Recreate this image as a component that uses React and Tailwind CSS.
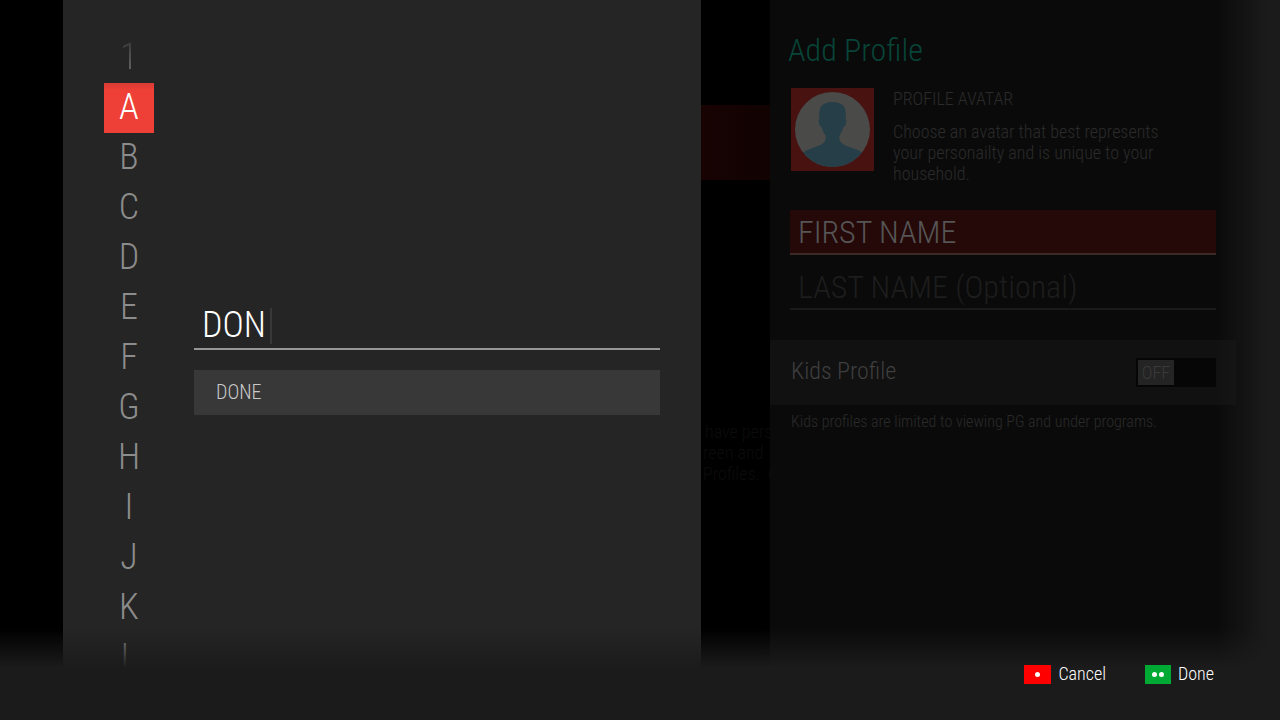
import React, { useState } from "react";

const LETTERS = ["1", "A", "B", "C", "D", "E", "F", "G", "H", "I", "J", "K", "L"];

function LetterPicker({ selected, onSelect }) {
  return (
    <nav aria-label="Letters" className="flex w-[50px] shrink-0 flex-col pt-[33px]">
      {LETTERS.map((letter) => (
        <button
          key={letter}
          type="button"
          onClick={() => onSelect(letter)}
          className={
            letter === selected
              ? "h-[50px] bg-gradient-to-b from-[#d93b35] to-[#ee4036] to-15% pb-0.5 text-4xl text-white"
              : letter === "1"
                ? "h-[50px] bg-gradient-to-b from-[#303030] to-[#777777] bg-clip-text pb-0.5 text-4xl text-transparent"
                : "h-[50px] pb-0.5 text-4xl text-[#8c8c8c]"
          }
        >
          {letter}
        </button>
      ))}
    </nav>
  );
}

function NameEntry({ name, onChange }) {
  return (
    <form
      className="flex min-w-0 flex-1 flex-col gap-5 pt-[300px]"
      onSubmit={(event) => event.preventDefault()}
    >
      <div className="flex h-[50px] items-end border-b-2 border-[#969696] pb-1 pl-2">
        <input
          aria-label="First name"
          value={name}
          onChange={(event) => onChange(event.target.value)}
          className="field-sizing-content h-[38px] bg-transparent text-4xl text-white outline-none"
        />
        <span className="ml-1 h-9 w-0.5 bg-[#383838]" />
      </div>
      <button type="submit" className="h-[45px] bg-[#383838] px-[22px] pb-0.5 text-left text-xl text-[#cacaca]">
        DONE
      </button>
    </form>
  );
}

function Avatar() {
  return (
    <svg viewBox="0 0 83 83" className="size-[83px] shrink-0" role="img" aria-label="Avatar">
      <defs>
        <clipPath id="avatar-disc">
          <circle cx="41.5" cy="41.5" r="37.5" />
        </clipPath>
      </defs>
      <rect width="83" height="83" fill="#471210" />
      <circle cx="41.5" cy="41.5" r="37.5" fill="#4a4a48" />
      <path
        clipPath="url(#avatar-disc)"
        fill="#253e47"
        d="M41.5 14C49 14 54.5 17.500 54.700 24V31C55.600 31.200 55.500 33.500 54.800 36C54.200 38 53.400 39 52.300 39.200C51.500 42.500 50.500 44.500 49 46.500C48 48.500 48 50 48.800 52C50 56 54 57.500 60 59.500C66 61.500 70 63 72.500 66V83H10.500V66C13 63 17 61.500 23 59.500C29 57.500 33 56 34.200 52C35 50 35 48.500 34 46.500C32.500 44.500 31.500 42.500 30.700 39.200C29.600 39 28.800 38 28.200 36C27.500 33.500 27.400 31.200 28.300 31V24C28.500 17.500 34 14 41.5 14Z"
      />
    </svg>
  );
}

function AddProfile() {
  const [kids, setKids] = useState(false);
  return (
    <section className="min-w-0 bg-[#0a0a0a]">
      <div className="px-5 pt-[30px]">
        <h1 className="-ml-0.5 text-[32px] leading-10 text-[#084437]">Add Profile</h1>
        <div className="mt-[18px] flex gap-[19px] pl-px">
          <Avatar />
          <div className="text-lg leading-[21px] text-[#2b2b2b]">
            <h2>PROFILE AVATAR</h2>
            <p className="mt-3 max-w-[280px]">
              Choose an avatar that best represents your personailty and is unique to your household.
            </p>
          </div>
        </div>
        <input
          aria-label="First name"
          placeholder="FIRST NAME"
          className="mt-[26px] h-[45px] w-full border-b-2 border-[#3c2a29] bg-[#250909] px-2 text-[32px] outline-none placeholder:text-[#555555]"
        />
        <input
          aria-label="Last name"
          placeholder="LAST NAME (Optional)"
          className="mt-[10px] h-[45px] w-full border-b-2 border-[#1a1a1a] bg-transparent px-2 text-[32px] outline-none placeholder:text-[#1d1d1d]"
        />
      </div>
      <label className="mt-[30px] flex h-[65px] items-center justify-between bg-[#111111] px-5">
        <span className="pb-1 pl-px text-2xl leading-8 text-[#3f3f3f]">Kids Profile</span>
        <input
          type="checkbox"
          role="switch"
          checked={kids}
          onChange={() => setKids(!kids)}
          className="sr-only"
        />
        <span className={kids ? "flex h-[29px] w-20 justify-end bg-[#060606] p-0.5" : "flex h-[29px] w-20 bg-[#060606] p-0.5"}>
          <span className="w-9 bg-[#242424] text-center text-lg leading-[25px] text-[#3a3a3a]">
            {kids ? "ON" : "OFF"}
          </span>
        </span>
      </label>
      <p className="mt-1.5 pl-[21px] text-base leading-[21px] text-[#2b2b2b]">
        Kids profiles are limited to viewing PG and under programs.
      </p>
    </section>
  );
}

function Footer() {
  return (
    <footer className="absolute inset-x-0 bottom-0">
      <div className="h-10 bg-gradient-to-b from-transparent to-[#1b1b1b]" />
      <div className="flex h-[52px] justify-end gap-[39px] bg-[#1b1b1b] pr-[66px] text-lg leading-3 text-white">
        <button type="button" className="flex h-3 items-center gap-[7px]">
          <span className="flex h-[19px] w-[27px] items-center justify-center bg-[#ff0000]">
            <span className="size-[5px] rounded-full bg-white" />
          </span>
          Cancel
        </button>
        <button type="button" className="flex h-3 items-center gap-[7px]">
          <span className="flex h-[19px] w-[26px] items-center justify-center gap-0.5 bg-[#00a933]">
            <span className="size-[5px] rounded-full bg-white" />
            <span className="size-[5px] rounded-full bg-white" />
          </span>
          Done
        </button>
      </div>
    </footer>
  );
}

export default function App() {
  const [selected, setSelected] = useState("A");
  const [name, setName] = useState("DON");

  return (
    <main className="relative grid h-screen grid-cols-[63fr_638fr_69fr_466fr_44fr] overflow-hidden bg-black font-['Roboto_Condensed','Liberation_Sans_Narrow',Roboto,sans-serif] font-light">
      <div />
      <section className="flex min-w-0 gap-10 bg-[#252525] px-[41px]">
        <LetterPicker selected={selected} onSelect={setSelected} />
        <NameEntry name={name} onChange={setName} />
      </section>
      <aside className="min-w-0 overflow-hidden pt-[105px]">
        <div className="h-[75px] bg-gradient-to-r from-[#180303] to-[#120202]" />
        <div className="pt-[241px] pl-0.5 text-lg leading-[21px] whitespace-nowrap text-[#0c0c0c]">
          <p className="pl-0.5">have pers</p>
          <p>reen and</p>
          <p>Profiles. &nbsp;C</p>
        </div>
      </aside>
      <AddProfile />
      <div className="bg-[#0a0a0a]" />
      <div className="pointer-events-none absolute inset-y-0 right-0 w-16 bg-gradient-to-r from-transparent to-[#1b1b1b] to-80%" />
      <Footer />
    </main>
  );
}
